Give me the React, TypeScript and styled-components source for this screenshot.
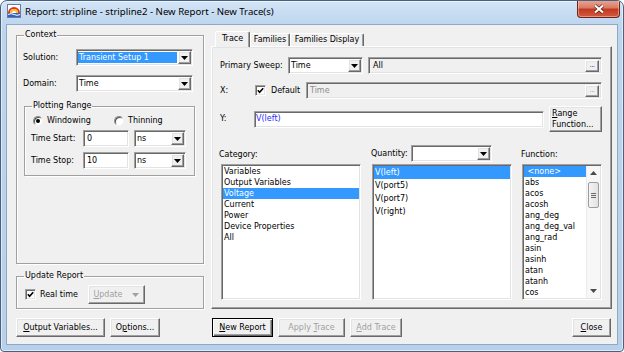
import React from "react";
import styled, { createGlobalStyle, css } from "styled-components";

const GlobalStyle = createGlobalStyle`
  html, body {
    margin: 0;
    padding: 0;
    background: #ffffff;
  }
  * {
    box-sizing: border-box;
  }
`;

const sunken = css`
  border: 1px solid;
  border-color: #a0a0a0 #ffffff #ffffff #a0a0a0;
  box-shadow: inset 1px 1px 0 #696969, inset -1px -1px 0 #e3e3e3;
`;

const raised = css`
  border: 1px solid;
  border-color: #ffffff #696969 #696969 #ffffff;
  box-shadow: inset -1px -1px 0 #a0a0a0, inset 1px 1px 0 #e3e3e3;
  background: #f0f0f0;
`;

const Window = styled.div`
  width: 624px;
  height: 352px;
  display: flex;
  flex-direction: column;
  border: 1px solid #48627e;
  border-radius: 7px 7px 4px 4px;
  background: linear-gradient(#d3e4f6, #bdd5ee 24px, #b8d0ea);
  box-shadow: inset 0 0 0 1px rgba(255, 255, 255, 0.55);
  overflow: hidden;
  font-family: "DejaVu Sans", Tahoma, sans-serif;
  font-size: 8px;
  line-height: 10px;
  color: #000;
`;

const TitleBar = styled.div`
  height: 23px;
  flex: none;
  display: flex;
  align-items: flex-start;
  padding-left: 6px;
`;

const AppIcon = styled.svg`
  margin-top: 3px;
  flex: none;
`;

const TitleText = styled.span`
  margin: 4px 0 0 4px;
  font-family: "Noto Sans", "Open Sans", sans-serif;
  font-size: 9.6px;
  line-height: 14px;
  white-space: nowrap;
`;

const CloseButton = styled.div`
  margin: -1px 3px 0 auto;
  width: 43px;
  height: 18px;
  flex: none;
  border: 1px solid #6e2418;
  border-top: none;
  border-radius: 0 0 4px 4px;
  background: linear-gradient(#eaa999, #d97a64 45%, #c23a22 55%, #d05a40);
  box-shadow: inset 0 0 0 1px rgba(255, 220, 210, 0.45);
  display: flex;
  align-items: center;
  justify-content: center;
`;

const Client = styled.div`
  flex: 1;
  margin: 0 5px 6px;
  border: 1px solid #8fa8c4;
  background: #f0f0f0;
  padding: 4px 5px 7px 9px;
  display: flex;
  flex-direction: column;
`;

const MainRow = styled.div`
  height: 278px;
  display: grid;
  grid-template-columns: 188px 1fr;
  column-gap: 7px;
`;

const ButtonRow = styled.div`
  height: 19px;
  margin-top: 11px;
  display: grid;
  grid-template-columns: 188px 1fr;
  column-gap: 7px;
`;

const ButtonGroup = styled.div<{ $inset?: number }>`
  display: flex;
  gap: 5px;
  padding: 0 ${(p) => p.$inset ?? 0}px;
`;

const LeftCol = styled.div`
  display: flex;
  flex-direction: column;
  gap: 6px;
`;

const GroupBox = styled.fieldset<{ $grow?: boolean; $h?: number }>`
  margin: 0;
  padding: 0 8px 0 6px;
  min-width: 0;
  border: 1px solid #a0a0a0;
  box-shadow: 1px 1px 0 #ffffff, inset 1px 1px 0 #ffffff;
  flex: ${(p) => (p.$grow ? "1" : "none")};
  height: ${(p) => (p.$h ? `${p.$h}px` : "auto")};
`;

const SubGroup = styled(GroupBox)`
  margin: 8px 0 0 1px;
  padding-bottom: 6px;
`;

const Legend = styled.legend`
  padding: 0 1px;
  margin-left: 1px;
  line-height: 12px;
`;

const FieldRow = styled.div<{ $top?: number; $h?: number }>`
  display: flex;
  align-items: center;
  height: ${(p) => p.$h ?? 17}px;
  margin-top: ${(p) => p.$top ?? 0}px;
`;

const FieldLabel = styled.span<{ $w: number }>`
  width: ${(p) => p.$w}px;
  flex: none;
  white-space: nowrap;
`;

const ComboFrame = styled.div<{ $w?: number }>`
  ${sunken};
  width: ${(p) => (p.$w ? `${p.$w}px` : "auto")};
  height: 17px;
  flex: none;
  padding: 1px;
  background: #ffffff;
  display: flex;
`;

const ComboValue = styled.span<{ $selected?: boolean }>`
  flex: 1;
  margin: 1px 1px 1px 0;
  padding-left: 1px;
  display: flex;
  align-items: center;
  white-space: nowrap;
  overflow: hidden;
  background: ${(p) => (p.$selected ? "#3399ff" : "transparent")};
  color: ${(p) => (p.$selected ? "#ffffff" : "#000000")};
`;

const DropButton = styled.span`
  ${raised};
  width: 13px;
  flex: none;
  display: flex;
  align-items: center;
  justify-content: center;
`;

const TextBox = styled.div<{ $w?: number; $muted?: boolean; $pad?: number; $color?: string }>`
  ${sunken};
  height: 17px;
  width: ${(p) => (p.$w ? `${p.$w}px` : "auto")};
  flex: ${(p) => (p.$w ? "none" : "1")};
  padding: 1px 2px 1px ${(p) => p.$pad ?? 3}px;
  display: flex;
  align-items: center;
  white-space: nowrap;
  background: ${(p) => (p.$muted ? "#f0f0f0" : "#ffffff")};
  color: ${(p) => p.$color ?? "#000000"};
`;

const EllipsisButton = styled.span<{ $disabled?: boolean }>`
  ${raised};
  margin-left: auto;
  width: 14px;
  height: 12px;
  display: flex;
  align-items: flex-end;
  justify-content: center;
  padding-bottom: 2px;
  font-size: 7px;
  line-height: 7px;
  letter-spacing: -0.5px;
  color: ${(p) => (p.$disabled ? "#a0a0a0" : "#1530c8")};
`;

const PushButton = styled.div<{ $w: number; $h?: number; $default?: boolean; $disabled?: boolean; $left?: boolean }>`
  ${raised};
  width: ${(p) => p.$w}px;
  height: ${(p) => p.$h ?? 19}px;
  flex: none;
  display: flex;
  flex-direction: column;
  align-items: ${(p) => (p.$left ? "flex-start" : "center")};
  justify-content: center;
  padding-left: ${(p) => (p.$left ? 2 : 0)}px;
  line-height: 11px;
  white-space: nowrap;
  color: ${(p) => (p.$disabled ? "#a0a0a0" : "#000000")};
  ${(p) =>
    p.$default &&
    css`
      border-color: #000000;
      box-shadow: inset 1px 1px 0 #ffffff, inset -1px -1px 0 #696969, inset -2px -2px 0 #a0a0a0;
    `}
`;

const SplitInner = styled.span`
  display: flex;
  align-items: center;
  gap: 10px;
`;

const Spacer = styled.div`
  flex: 1;
`;

const CheckBox = styled.span`
  ${sunken};
  width: 11px;
  height: 11px;
  flex: none;
  background: #ffffff;
  display: flex;
  align-items: center;
  justify-content: center;
`;

const CheckLabel = styled.span<{ $gap?: number }>`
  margin-left: ${(p) => p.$gap ?? 4}px;
  white-space: nowrap;
`;

const Radio = styled.span<{ $on?: boolean }>`
  width: 10px;
  height: 10px;
  flex: none;
  border-radius: 50%;
  border: 1px solid;
  border-color: #8a8a8a #f4f4f4 #f4f4f4 #8a8a8a;
  box-shadow: inset 1px 1px 0 #505050;
  background: #ffffff;
  display: flex;
  align-items: center;
  justify-content: center;
  &::after {
    content: "";
    width: 4px;
    height: 4px;
    border-radius: 50%;
    background: ${(p) => (p.$on ? "#000000" : "transparent")};
  }
`;

const RadioOption = styled.span<{ $w?: number }>`
  display: flex;
  align-items: center;
  width: ${(p) => (p.$w ? `${p.$w}px` : "auto")};
`;

const TabArea = styled.div`
  display: flex;
  flex-direction: column;
`;

const TabStrip = styled.div`
  height: 17px;
  flex: none;
  padding-left: 4px;
  display: flex;
  align-items: flex-end;
`;

const Tab = styled.div<{ $active?: boolean; $w: number }>`
  position: relative;
  z-index: ${(p) => (p.$active ? 1 : 0)};
  width: ${(p) => p.$w}px;
  height: ${(p) => (p.$active ? 16 : 13)}px;
  margin-bottom: ${(p) => (p.$active ? -1 : 0)}px;
  border: 1px solid;
  border-bottom: none;
  border-color: #ffffff #696969 #ffffff #ffffff;
  border-radius: 2px 2px 0 0;
  box-shadow: inset -1px 0 0 #a0a0a0;
  background: #f0f0f0;
  display: flex;
  justify-content: center;
  padding-top: ${(p) => (p.$active ? 2 : 1)}px;
  white-space: nowrap;
`;

const TabPanel = styled.div`
  flex: 1;
  border: 1px solid;
  border-color: #ffffff #696969 #696969 #ffffff;
  box-shadow: inset -1px -1px 0 #a0a0a0, inset 1px 1px 0 #e3e3e3;
  padding: 10px 9px 8px 8px;
  display: flex;
  flex-direction: column;
`;

const ListsRow = styled.div`
  flex: 1;
  margin-top: 13px;
  display: flex;
`;

const ListColumn = styled.div<{ $w: number; $gap?: number }>`
  width: ${(p) => p.$w}px;
  margin-left: ${(p) => p.$gap ?? 0}px;
  display: flex;
  flex-direction: column;
`;

const ListHeader = styled.div`
  height: 17px;
  display: flex;
  align-items: flex-end;
  padding-bottom: 2px;
  margin-left: -1px;
`;

const QuantityHeader = styled.div`
  height: 17px;
  display: flex;
  align-items: center;
  margin-left: -1px;
`;

const ListBox = styled.div<{ $inset?: number }>`
  ${sunken};
  flex: 1;
  margin: 2px 0 0 ${(p) => p.$inset ?? 0}px;
  padding: 1px;
  background: #ffffff;
  overflow: hidden;
  display: flex;
`;

const ListItems = styled.div`
  flex: 1;
  min-width: 0;
  display: flex;
  flex-direction: column;
`;

const ListItem = styled.div<{ $h: number; $selected?: boolean }>`
  height: ${(p) => p.$h}px;
  line-height: ${(p) => p.$h}px;
  flex: none;
  padding-left: 1px;
  white-space: nowrap;
  background: ${(p) => (p.$selected ? "#3399ff" : "transparent")};
  color: ${(p) => (p.$selected ? "#ffffff" : "#000000")};
`;

const ScrollBar = styled.div`
  width: 14px;
  flex: none;
  background: #f7f7f7;
  border-left: 1px solid #ececec;
  display: flex;
  flex-direction: column;
  align-items: center;
`;

const ScrollArrow = styled.div<{ $bottom?: boolean }>`
  height: 14px;
  width: 100%;
  margin-top: ${(p) => (p.$bottom ? "auto" : "0")};
  display: flex;
  align-items: center;
  justify-content: center;
`;

const ScrollThumb = styled.div`
  width: 11px;
  height: 26px;
  margin-top: 2px;
  border: 1px solid #9d9d9d;
  border-radius: 2px;
  background: linear-gradient(90deg, #f4f4f4, #e2e2e2);
  display: flex;
  flex-direction: column;
  align-items: center;
  justify-content: center;
  gap: 1px;
`;

const Grip = styled.span`
  width: 5px;
  height: 1px;
  background: #6a6a6a;
`;

const Triangle = ({ up, color = "#000" }: { up?: boolean; color?: string }) => (
  <svg width="7" height="4" viewBox="0 0 7 4">
    <polygon points={up ? "0,4 7,4 3.5,0" : "0,0 7,0 3.5,4"} fill={color} />
  </svg>
);

const Check = () => (
  <svg width="7" height="7" viewBox="0 0 7 7">
    <path d="M0.8 3.2 L2.6 5.2 L6.2 1.2" stroke="#000" strokeWidth="1.6" fill="none" />
  </svg>
);

function Combo({ w, value, selected }: { w?: number; value?: string; selected?: boolean }) {
  return (
    <ComboFrame $w={w}>
      <ComboValue $selected={selected}>{value}</ComboValue>
      <DropButton>
        <Triangle />
      </DropButton>
    </ComboFrame>
  );
}

const categories = ["Variables", "Output Variables", "Voltage", "Current", "Power", "Device Properties", "All"];
const quantities = ["V(left)", "V(port5)", "V(port7)", "V(right)"];
const functions = [
  "<none>",
  "abs",
  "acos",
  "acosh",
  "ang_deg",
  "ang_deg_val",
  "ang_rad",
  "asin",
  "asinh",
  "atan",
  "atanh",
  "cos",
];

export default function App() {
  return (
    <>
      <GlobalStyle />
      <Window>
        <TitleBar>
          <AppIcon width="14" height="14" viewBox="0 0 14 14">
            <rect x="0.5" y="0.5" width="13" height="13" fill="#ffffff" stroke="#6b7d96" />
            <path d="M2 9 A5 5 0 0 1 12 9" stroke="#e2311d" strokeWidth="2" fill="none" />
            <path d="M4 9 A3 3 0 0 1 10 9" stroke="#f6c21c" strokeWidth="2" fill="none" />
            <rect x="1" y="9" width="12" height="4" fill="#2f5fd0" />
            <path d="M1 10.5 Q4 8.8 7 10.5 T13 10.5" stroke="#ffffff" strokeWidth="1" fill="none" />
          </AppIcon>
          <TitleText>Report: stripline - stripline2 - New Report - New Trace(s)</TitleText>
          <CloseButton>
            <svg width="12" height="10" viewBox="0 0 12 10">
              <path d="M2 1.5 L10 8.5 M10 1.5 L2 8.5" stroke="#5a1c12" strokeWidth="3.6" />
              <path d="M2 1.5 L10 8.5 M10 1.5 L2 8.5" stroke="#ffffff" strokeWidth="2.2" />
            </svg>
          </CloseButton>
        </TitleBar>

        <Client>
          <MainRow>
            <LeftCol>
              <GroupBox $grow>
                <Legend>Context</Legend>
                <FieldRow $top={8}>
                  <FieldLabel $w={53}>Solution:</FieldLabel>
                  <Combo w={117} value="Transient Setup 1" selected />
                </FieldRow>
                <FieldRow $top={9}>
                  <FieldLabel $w={53}>Domain:</FieldLabel>
                  <Combo w={117} value="Time" />
                </FieldRow>
                <SubGroup>
                  <Legend>Plotting Range</Legend>
                  <FieldRow $top={2} $h={14}>
                    <RadioOption $w={83}>
                      <Radio $on style={{ marginLeft: 2 }} />
                      <CheckLabel>Windowing</CheckLabel>
                    </RadioOption>
                    <RadioOption>
                      <Radio />
                      <CheckLabel>Thinning</CheckLabel>
                    </RadioOption>
                  </FieldRow>
                  <FieldRow $top={2}>
                    <FieldLabel $w={52}>Time Start:</FieldLabel>
                    <TextBox $w={46}>0</TextBox>
                    <Spacer />
                    <Combo w={52} value="ns" />
                  </FieldRow>
                  <FieldRow $top={5}>
                    <FieldLabel $w={52}>Time Stop:</FieldLabel>
                    <TextBox $w={46}>10</TextBox>
                    <Spacer />
                    <Combo w={52} value="ns" />
                  </FieldRow>
                </SubGroup>
              </GroupBox>

              <GroupBox $h={39}>
                <Legend>Update Report</Legend>
                <FieldRow $top={3} $h={19}>
                  <CheckBox style={{ marginLeft: 2 }}>
                    <Check />
                  </CheckBox>
                  <CheckLabel>Real time</CheckLabel>
                  <PushButton $w={57} $disabled style={{ marginLeft: 10 }}>
                    <SplitInner>
                      <span>
                        <u>U</u>pdate
                      </span>
                      <Triangle color="#a0a0a0" />
                    </SplitInner>
                  </PushButton>
                </FieldRow>
              </GroupBox>
            </LeftCol>

            <TabArea>
              <TabStrip>
                <Tab $active $w={35}>Trace</Tab>
                <Tab $w={40}>Families</Tab>
                <Tab $w={74}>Families Display</Tab>
              </TabStrip>
              <TabPanel>
                <FieldRow>
                  <FieldLabel $w={68}>Primary Sweep:</FieldLabel>
                  <Combo w={75} value="Time" />
                  <TextBox $muted $pad={4} style={{ marginLeft: 5 }}>
                    All
                    <EllipsisButton>...</EllipsisButton>
                  </TextBox>
                </FieldRow>
                <FieldRow $top={8}>
                  <FieldLabel $w={35}>X:</FieldLabel>
                  <RadioOption $w={51}>
                    <CheckBox>
                      <Check />
                    </CheckBox>
                    <CheckLabel $gap={5}>Default</CheckLabel>
                  </RadioOption>
                  <TextBox $muted $color="#8d8d8d">
                    Time
                    <EllipsisButton $disabled>...</EllipsisButton>
                  </TextBox>
                </FieldRow>
                <FieldRow $top={7} $h={26}>
                  <FieldLabel $w={34}>Y:</FieldLabel>
                  <TextBox $pad={1} $color="#2b2bff">V(left)</TextBox>
                  <PushButton $w={53} $h={26} $left style={{ marginLeft: 5 }}>
                    <span>
                      <u>R</u>ange
                    </span>
                    <span>Function...</span>
                  </PushButton>
                </FieldRow>

                <ListsRow>
                  <ListColumn $w={141}>
                    <ListHeader>Category:</ListHeader>
                    <ListBox $inset={1}>
                      <ListItems>
                        {categories.map((c) => (
                          <ListItem key={c} $h={11} $selected={c === "Voltage"}>
                            {c}
                          </ListItem>
                        ))}
                      </ListItems>
                    </ListBox>
                  </ListColumn>
                  <ListColumn $w={140} $gap={11}>
                    <QuantityHeader>
                      <FieldLabel $w={40}>Quantity:</FieldLabel>
                      <Combo w={81} />
                    </QuantityHeader>
                    <ListBox>
                      <ListItems>
                        {quantities.map((q) => (
                          <ListItem key={q} $h={13} $selected={q === "V(left)"}>
                            {q}
                          </ListItem>
                        ))}
                      </ListItems>
                    </ListBox>
                  </ListColumn>
                  <ListColumn $w={80} $gap={10}>
                    <ListHeader>Function:</ListHeader>
                    <ListBox>
                      <ListItems>
                        {functions.map((f) => (
                          <ListItem key={f} $h={11} $selected={f === "<none>"}>
                            {f === "<none>" ? "\u00a0<none>" : f}
                          </ListItem>
                        ))}
                      </ListItems>
                      <ScrollBar>
                        <ScrollArrow>
                          <Triangle up color="#4a4a4a" />
                        </ScrollArrow>
                        <ScrollThumb>
                          <Grip />
                          <Grip />
                          <Grip />
                        </ScrollThumb>
                        <ScrollArrow $bottom>
                          <Triangle color="#4a4a4a" />
                        </ScrollArrow>
                      </ScrollBar>
                    </ListBox>
                  </ListColumn>
                </ListsRow>
              </TabPanel>
            </TabArea>
          </MainRow>

          <ButtonRow>
            <ButtonGroup>
              <PushButton $w={89}>
                <span>
                  <u>O</u>utput Variables...
                </span>
              </PushButton>
              <PushButton $w={50}>
                <span>
                  O<u>p</u>tions...
                </span>
              </PushButton>
            </ButtonGroup>
            <ButtonGroup $inset={1}>
              <PushButton $w={61} $default>
                <span>
                  <u>N</u>ew Report
                </span>
              </PushButton>
              <PushButton $w={67} $disabled>
                <span>
                  Apply <u>T</u>race
                </span>
              </PushButton>
              <PushButton $w={52} $disabled>
                <span>
                  <u>A</u>dd Trace
                </span>
              </PushButton>
              <Spacer />
              <PushButton $w={39}>
                <span>
                  <u>C</u>lose
                </span>
              </PushButton>
            </ButtonGroup>
          </ButtonRow>
        </Client>
      </Window>
    </>
  );
}
